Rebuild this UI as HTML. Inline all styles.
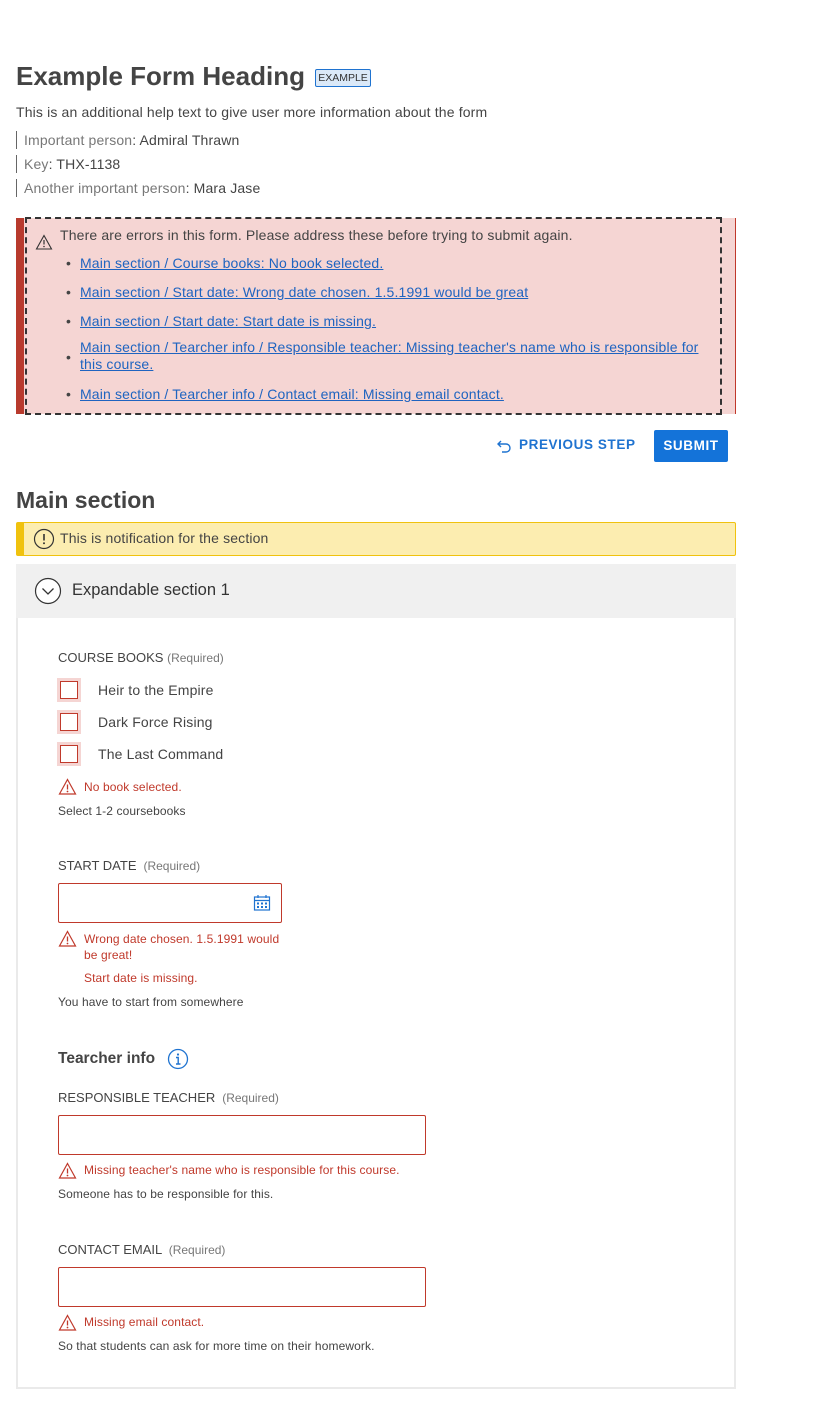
<!DOCTYPE html>
<html><head><meta charset="utf-8"><style>
*{margin:0;padding:0;box-sizing:border-box}
body{width:814px;height:1421px;background:#fff;font-family:"Liberation Sans",sans-serif;color:#444;position:relative;overflow:hidden}
.a{position:absolute;white-space:nowrap}
.t14{font-size:14px;line-height:18px;letter-spacing:.15px}
.t12{font-size:12px;line-height:16px;letter-spacing:.1px}
a{color:#1f64c0;text-decoration:underline}
.red{color:#c0392b}
.cb{position:absolute;left:57px;width:24px;height:24px;background:#f5d5d3;padding:3px}
.cb div{width:18px;height:18px;border:1.5px solid #c0392b;background:#fff}
.inp{position:absolute;left:58px;height:40px;border:1px solid #c0392b;border-radius:2px;background:#fff}
.lbl{position:absolute;left:58px;font-size:13px;line-height:16px;color:#444}
.req{font-size:12px;color:#777}
</style></head><body>

<div class="a" style="left:16px;top:59px;font-size:26px;line-height:34px;font-weight:bold;color:#444">Example Form Heading</div>
<div class="a" style="left:315px;top:69px;width:56px;height:18px;border:1px solid #1f73d0;background:#dbe9f8;border-radius:2px;font-size:10.5px;line-height:16px;text-align:center;color:#333">EXAMPLE</div>
<div class="a t14" style="left:16px;top:103px">This is an additional help text to give user more information about the form</div>
<div class="a t14" style="left:16px;top:131px;border-left:1px solid #666;padding-left:7px"><span style="color:#777">Important person</span>: Admiral Thrawn</div>
<div class="a t14" style="left:16px;top:155px;border-left:1px solid #666;padding-left:7px"><span style="color:#777">Key</span>: THX-1138</div>
<div class="a t14" style="left:16px;top:179px;border-left:1px solid #666;padding-left:7px"><span style="color:#777">Another important person</span>: Mara Jase</div>

<div class="a" style="left:16px;top:218px;width:720px;height:196px;background:#f5d5d3;border-left:8px solid #b83a2d;border-right:1px solid #c0392b"></div>
<div class="a" style="left:25px;top:217px;width:697px;height:198px;border:2px dashed #333"></div>
<svg class="a" style="left:35px;top:234px" width="18" height="16" viewBox="0 0 18 16"><path d="M9 1.5 L16.5 15 H1.5 Z" fill="none" stroke="#333" stroke-width="1.1"/><path d="M9 6v4.5" stroke="#333" stroke-width="1.2"/><circle cx="9" cy="12.5" r=".8" fill="#333"/></svg>
<div class="a t14" style="left:60px;top:226px">There are errors in this form. Please address these before trying to submit again.</div>
<div class="a t14" style="left:66px;top:254px">•</div><a class="a t14" style="left:80px;top:254px">Main section / Course books: No book selected.</a>
<div class="a t14" style="left:66px;top:283px">•</div><a class="a t14" style="left:80px;top:283px">Main section / Start date: Wrong date chosen. 1.5.1991 would be great</a>
<div class="a t14" style="left:66px;top:312px">•</div><a class="a t14" style="left:80px;top:312px">Main section / Start date: Start date is missing.</a>
<div class="a t14" style="left:66px;top:348px">•</div><a class="a t14" style="left:80px;top:339px;line-height:17px">Main section / Tearcher info / Responsible teacher: Missing teacher's name who is responsible for</a><a class="a t14" style="left:80px;top:356px;line-height:17px">this course.</a>
<div class="a t14" style="left:66px;top:385px">•</div><a class="a t14" style="left:80px;top:385px">Main section / Tearcher info / Contact email: Missing email contact.</a>

<svg class="a" style="left:496px;top:438px" width="16" height="16" viewBox="0 0 16 16"><path d="M5 3 L2 6 L5 9 M2 6 H10 a4 4 0 0 1 0 8 H6" fill="none" stroke="#1f73d0" stroke-width="1.4"/></svg>
<div class="a" style="left:519px;top:437px;font-size:13.5px;line-height:16px;font-weight:bold;color:#1f73d0;letter-spacing:.6px">PREVIOUS STEP</div>
<div class="a" style="left:654px;top:430px;width:74px;height:32px;background:#1473d9;border-radius:2px;color:#fff;font-size:13.5px;font-weight:bold;line-height:32px;text-align:center;letter-spacing:.6px">SUBMIT</div>

<div class="a" style="left:16px;top:485px;font-size:23px;line-height:30px;font-weight:bold;color:#444">Main section</div>
<div class="a" style="left:16px;top:522px;width:720px;height:34px;background:#fcedb0;border:1px solid #f0c20e;border-left:8px solid #f0c20e;border-radius:2px"></div>
<svg class="a" style="left:33px;top:528px" width="22" height="22" viewBox="0 0 22 22"><circle cx="11" cy="11" r="9.5" fill="none" stroke="#333" stroke-width="1.2"/><path d="M11 6v6.5" stroke="#333" stroke-width="1.6"/><circle cx="11" cy="15.3" r="1" fill="#333"/></svg>
<div class="a t14" style="left:60px;top:529px">This is notification for the section</div>

<div class="a" style="left:16px;top:564px;width:720px;height:54px;background:#f0f0f0"></div>
<svg class="a" style="left:34px;top:577px" width="28" height="28" viewBox="0 0 28 28"><circle cx="14" cy="14" r="12.5" fill="#fff" stroke="#333" stroke-width="1.2"/><path d="M8.5 11.5 L14 17 L19.5 11.5" fill="none" stroke="#333" stroke-width="1.3"/></svg>
<div class="a" style="left:72px;top:580px;font-size:16.5px;line-height:20px;color:#333">Expandable section 1</div>
<div class="a" style="left:16px;top:618px;width:720px;height:771px;border:2px solid #eaeaea;border-top:none"></div>

<div class="lbl" style="top:650px">COURSE BOOKS <span class="req">(Required)</span></div>
<div class="cb" style="top:678px"><div></div></div><div class="a t14" style="left:98px;top:681px">Heir to the Empire</div>
<div class="cb" style="top:710px"><div></div></div><div class="a t14" style="left:98px;top:713px">Dark Force Rising</div>
<div class="cb" style="top:742px"><div></div></div><div class="a t14" style="left:98px;top:745px">The Last Command</div>
<svg class="a" style="left:58px;top:778px" width="19" height="17" viewBox="0 0 19 17"><path d="M9.5 1.5 L17.5 16 H1.5 Z" fill="none" stroke="#c0392b" stroke-width="1.2"/><path d="M9.5 6.5v5" stroke="#c0392b" stroke-width="1.3"/><circle cx="9.5" cy="13.5" r=".9" fill="#c0392b"/></svg>
<div class="a t12 red" style="left:84px;top:779px">No book selected.</div>
<div class="a t12" style="left:58px;top:803px">Select 1-2 coursebooks</div>

<div class="lbl" style="top:858px">START DATE <span class="req">&nbsp;(Required)</span></div>
<div class="inp" style="top:883px;width:224px"></div>
<svg class="a" style="left:253px;top:894px" width="18" height="18" viewBox="0 0 18 18"><rect x="1.5" y="3" width="15" height="13" fill="#fff" stroke="#1f73d0" stroke-width="1.2"/><path d="M1.5 6.5h15M5 1v3M13 1v3" stroke="#1f73d0" stroke-width="1.2"/><g fill="#1f73d0"><rect x="4" y="8.5" width="2" height="2"/><rect x="8" y="8.5" width="2" height="2"/><rect x="12" y="8.5" width="2" height="2"/><rect x="4" y="12" width="2" height="2"/><rect x="8" y="12" width="2" height="2"/><rect x="12" y="12" width="2" height="2"/></g></svg>
<svg class="a" style="left:58px;top:930px" width="19" height="17" viewBox="0 0 19 17"><path d="M9.5 1.5 L17.5 16 H1.5 Z" fill="none" stroke="#c0392b" stroke-width="1.2"/><path d="M9.5 6.5v5" stroke="#c0392b" stroke-width="1.3"/><circle cx="9.5" cy="13.5" r=".9" fill="#c0392b"/></svg>
<div class="a t12 red" style="left:84px;top:931px">Wrong date chosen. 1.5.1991 would</div>
<div class="a t12 red" style="left:84px;top:947px">be great!</div>
<div class="a t12 red" style="left:84px;top:970px">Start date is missing.</div>
<div class="a t12" style="left:58px;top:994px">You have to start from somewhere</div>

<div class="a" style="left:58px;top:1049px;font-size:15.5px;line-height:19px;font-weight:bold;color:#444">Tearcher info</div>
<svg class="a" style="left:167px;top:1048px" width="22" height="22" viewBox="0 0 22 22"><circle cx="11" cy="11" r="9.5" fill="none" stroke="#1f73d0" stroke-width="1.3"/><circle cx="11" cy="6.5" r="1.1" fill="#1f73d0"/><path d="M9 9.5h2.2v6.5M9 16h4.5" fill="none" stroke="#1f73d0" stroke-width="1.4"/></svg>

<div class="lbl" style="top:1090px">RESPONSIBLE TEACHER <span class="req">&nbsp;(Required)</span></div>
<div class="inp" style="top:1115px;width:368px"></div>
<svg class="a" style="left:58px;top:1162px" width="19" height="17" viewBox="0 0 19 17"><path d="M9.5 1.5 L17.5 16 H1.5 Z" fill="none" stroke="#c0392b" stroke-width="1.2"/><path d="M9.5 6.5v5" stroke="#c0392b" stroke-width="1.3"/><circle cx="9.5" cy="13.5" r=".9" fill="#c0392b"/></svg>
<div class="a t12 red" style="left:84px;top:1162px">Missing teacher's name who is responsible for this course.</div>
<div class="a t12" style="left:58px;top:1186px">Someone has to be responsible for this.</div>

<div class="lbl" style="top:1242px">CONTACT EMAIL <span class="req">&nbsp;(Required)</span></div>
<div class="inp" style="top:1267px;width:368px"></div>
<svg class="a" style="left:58px;top:1314px" width="19" height="17" viewBox="0 0 19 17"><path d="M9.5 1.5 L17.5 16 H1.5 Z" fill="none" stroke="#c0392b" stroke-width="1.2"/><path d="M9.5 6.5v5" stroke="#c0392b" stroke-width="1.3"/><circle cx="9.5" cy="13.5" r=".9" fill="#c0392b"/></svg>
<div class="a t12 red" style="left:84px;top:1314px">Missing email contact.</div>
<div class="a t12" style="left:58px;top:1338px">So that students can ask for more time on their homework.</div>
</body></html>
